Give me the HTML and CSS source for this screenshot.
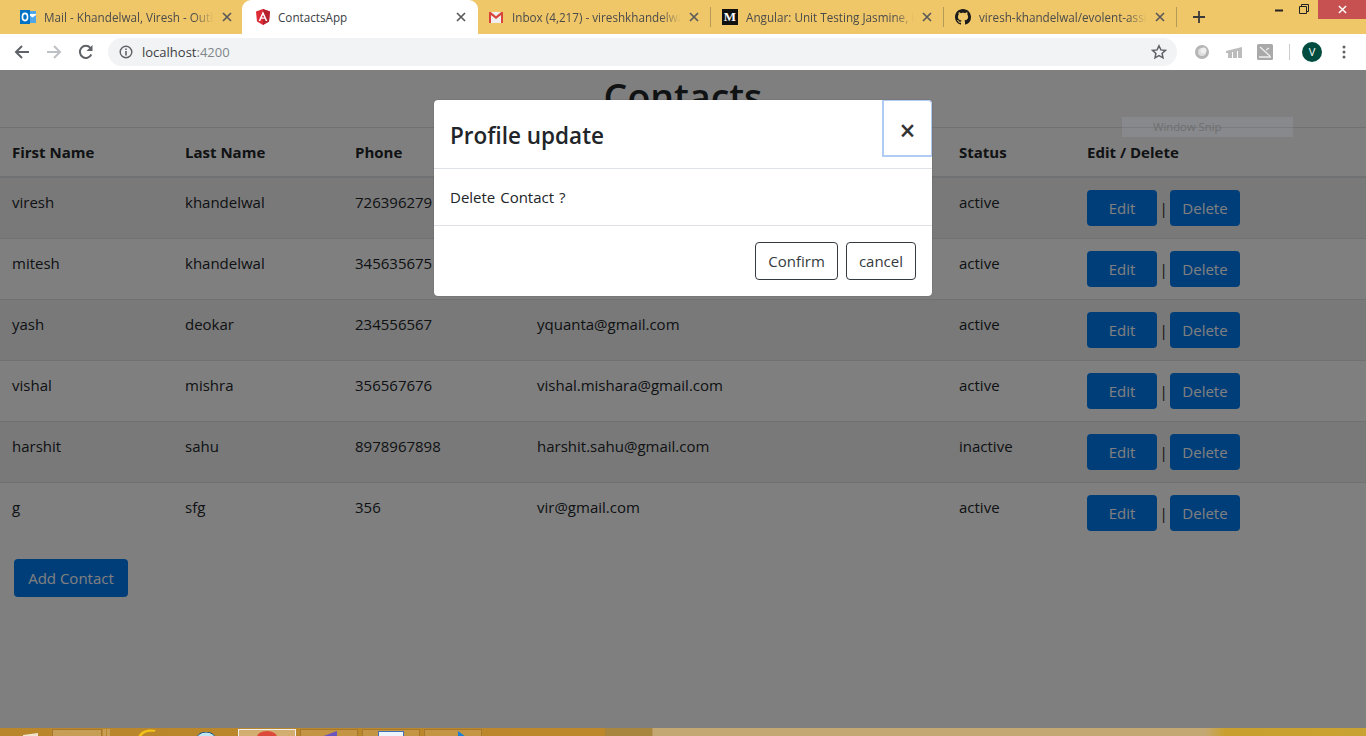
FILE: index.html
```html
<!DOCTYPE html>
<html lang="en">
<head>
<meta charset="utf-8">
<title>ContactsApp</title>
<link rel="stylesheet" href="styles.css">
</head>
<body>
<header class="tabstrip">
  <div class="tab tab-first">
    <svg class="favicon" viewBox="0 0 16 16"><rect x="6" y="2" width="10" height="12" fill="#4fa6e8"/><path d="M9 6l3.5 2.5L16 6v-1H9z" fill="#fff"/><rect y="1" width="10" height="14" fill="#0072c6"/><ellipse cx="5" cy="8" rx="2.6" ry="3.6" fill="none" stroke="#fff" stroke-width="1.6"/></svg>
    <span class="tab-title">Mail - Khandelwal, Viresh - Outlook</span>
    <svg class="tab-close" viewBox="0 0 10 10"><path d="M1 1l8 8M9 1l-8 8"/></svg>
  </div>
  <div class="tab tab-active">
    <svg class="favicon" viewBox="0 0 16 16"><path d="M8 0L1 2.5l1 10L8 16l6-3.500 1-10z" fill="#dd2c36"/><path d="M8 0v16l6-3.500 1-10z" fill="#b5212c"/><path d="M8 2.200L3.600 12h1.700l.9-2.200h3.600l.9 2.200h1.700zM8 6l1.300 2.600H6.700z" fill="#fff"/></svg>
    <span class="tab-title">ContactsApp</span>
    <svg class="tab-close" viewBox="0 0 10 10"><path d="M1 1l8 8M9 1l-8 8"/></svg>
  </div>
  <div class="tab tab-sep tab-gmail">
    <svg class="favicon favicon-gmail" viewBox="0 0 14 11"><rect width="14" height="11" fill="#eee"/><path d="M0 0h2v11H0zM12 0h2v11h-2z" fill="#d9453a"/><path d="M0 0h1.800L7 4.200 12.200 0H14v1.500L7 7 0 1.500z" fill="#d9453a"/></svg>
    <span class="tab-title">Inbox (4,217) - vireshkhandelwal@gmail.com</span>
    <svg class="tab-close" viewBox="0 0 10 10"><path d="M1 1l8 8M9 1l-8 8"/></svg>
  </div>
  <div class="tab tab-sep">
    <span class="favicon medium">M</span>
    <span class="tab-title">Angular: Unit Testing Jasmine, Karma</span>
    <svg class="tab-close" viewBox="0 0 10 10"><path d="M1 1l8 8M9 1l-8 8"/></svg>
  </div>
  <div class="tab tab-sep">
    <svg class="favicon" viewBox="0 0 16 16"><path fill="#1b1b1b" d="M8 0C3.580 0 0 3.580 0 8c0 3.540 2.290 6.530 5.470 7.590.4.070.55-.17.55-.38 0-.19-.01-.82-.01-1.490-2.010.37-2.530-.49-2.690-.94-.09-.23-.48-.94-.82-1.130-.28-.15-.68-.52-.01-.53.63-.01 1.080.58 1.230.82.72 1.210 1.870.87 2.330.66.07-.52.28-.87.51-1.070-1.780-.2-3.640-.89-3.640-3.950 0-.87.31-1.590.82-2.150-.08-.2-.36-1.020.08-2.120 0 0 .67-.21 2.200.82.64-.18 1.320-.27 2-.27.68 0 1.360.09 2 .27 1.530-1.040 2.200-.82 2.200-.82.44 1.100.16 1.920.08 2.120.51.56.82 1.270.82 2.150 0 3.070-1.870 3.750-3.650 3.950.29.25.54.73.54 1.480 0 1.070-.01 1.930-.01 2.200 0 .21.15.46.55.38A8.013 8.013 0 0016 8c0-4.420-3.580-8-8-8z"/></svg>
    <span class="tab-title">viresh-khandelwal/evolent-assignment</span>
    <svg class="tab-close" viewBox="0 0 10 10"><path d="M1 1l8 8M9 1l-8 8"/></svg>
  </div>
  <svg class="new-tab" viewBox="0 0 12 12"><path d="M6 0v12M0 6h12"/></svg>
  <div class="window-controls">
    <svg class="win-icon win-min" viewBox="0 0 10 10"><path d="M1 6.500h8" stroke="#222" stroke-width="2" fill="none"/></svg>
    <svg class="win-icon win-restore" viewBox="0 0 10 10"><path d="M.5 2.500h7v7h-7zM2.500 2.500v-2h7v7h-2" stroke="#222" stroke-width="1" fill="none"/></svg>
    <div class="win-close"><svg class="win-x" viewBox="0 0 10 10"><path d="M1 1l8 8M9 1l-8 8" stroke="#fff" stroke-width="1.600" fill="none"/></svg></div>
  </div>
</header>

<nav class="toolbar">
  <svg class="nav-icon" viewBox="0 0 16 16"><path d="M15 8H2M8 2L2 8l6 6" stroke="#5f6368" stroke-width="2" fill="none"/></svg>
  <svg class="nav-icon" viewBox="0 0 16 16"><path d="M1 8h13M8 2l6 6-6 6" stroke="#bdc1c6" stroke-width="2" fill="none"/></svg>
  <svg class="nav-icon" viewBox="0 0 16 16"><path d="M13.300 10.500A6 6 0 1 1 12.400 3.900" stroke="#5f6368" stroke-width="2" fill="none"/><path d="M14.500 1v6h-6z" fill="#5f6368"/></svg>
  <div class="omnibox">
    <svg class="info-icon" viewBox="0 0 14 14"><circle cx="7" cy="7" r="5.800" stroke="#5f6368" stroke-width="1.400" fill="none"/><path d="M6.200 6h1.600v4.500H6.200zM6.200 3.500h1.600v1.500H6.200z" fill="#5f6368"/></svg>
    <span class="url">localhost<span class="url-port">:4200</span></span>
    <svg class="star-icon" viewBox="0 0 16 16"><path d="M8 1.800l1.900 4.100 4.500.5-3.300 3 .9 4.400L8 11.600l-4 2.200.9-4.400-3.300-3 4.500-.5z" stroke="#5f6368" stroke-width="1.500" fill="none"/></svg>
  </div>
  <div class="extensions">
    <svg class="ext ext-ring" viewBox="0 0 14 14"><circle cx="7" cy="7" r="5.500" stroke="#b5b5b5" stroke-width="3" fill="#dedede"/><circle cx="8.500" cy="5.500" r="3" fill="#efefef"/></svg>
    <svg class="ext ext-bars" viewBox="0 0 16 12"><path d="M0 5l16-4v11h-4V5h-1v7H7V6H6v6H2V7H0z" fill="#bcbcbc"/></svg>
    <svg class="ext ext-box" viewBox="0 0 16 16"><rect width="16" height="16" rx="1.500" fill="#a9a9a9"/><path d="M3 3l10 9M2 13h12M9 6l3-2" stroke="#eee" stroke-width="1.300" fill="none"/></svg>
    <span class="toolbar-sep"></span>
    <span class="avatar">V</span>
    <svg class="menu-dots" viewBox="0 0 4 14"><circle cx="2" cy="2" r="1.500"/><circle cx="2" cy="7" r="1.500"/><circle cx="2" cy="12" r="1.500"/></svg>
  </div>
</nav>

<main class="page">
  <h1 class="page-title">Contacts</h1>
  <table class="contacts">
    <colgroup>
      <col class="c-first"><col class="c-last"><col class="c-phone"><col class="c-email"><col class="c-status"><col>
    </colgroup>
    <thead>
      <tr><th>First Name</th><th>Last Name</th><th>Phone</th><th>Email</th><th>Status</th><th>Edit / Delete</th></tr>
    </thead>
    <tbody>
      <tr><td>viresh</td><td>khandelwal</td><td>726396279</td><td>viresh.khandelwal@gmail.com</td><td>active</td><td><button class="btn">Edit</button><span class="pipe">|</span><button class="btn">Delete</button></td></tr>
      <tr><td>mitesh</td><td>khandelwal</td><td>345635675</td><td>mitesh.k@gmail.com</td><td>active</td><td><button class="btn">Edit</button><span class="pipe">|</span><button class="btn">Delete</button></td></tr>
      <tr><td>yash</td><td>deokar</td><td>234556567</td><td>yquanta@gmail.com</td><td>active</td><td><button class="btn">Edit</button><span class="pipe">|</span><button class="btn">Delete</button></td></tr>
      <tr><td>vishal</td><td>mishra</td><td>356567676</td><td>vishal.mishara@gmail.com</td><td>active</td><td><button class="btn">Edit</button><span class="pipe">|</span><button class="btn">Delete</button></td></tr>
      <tr><td>harshit</td><td>sahu</td><td>8978967898</td><td>harshit.sahu@gmail.com</td><td>inactive</td><td><button class="btn">Edit</button><span class="pipe">|</span><button class="btn">Delete</button></td></tr>
      <tr><td>g</td><td>sfg</td><td>356</td><td>vir@gmail.com</td><td>active</td><td><button class="btn">Edit</button><span class="pipe">|</span><button class="btn">Delete</button></td></tr>
    </tbody>
  </table>
  <button class="btn btn-add">Add Contact</button>

  <div class="backdrop"></div>
  <div class="snip">Window Snip</div>
  <section class="modal">
    <div class="modal-header">
      <h2 class="modal-title">Profile update</h2>
      <button class="modal-close">×</button>
    </div>
    <div class="modal-body">Delete Contact ?</div>
    <div class="modal-footer">
      <button class="btn-outline">Confirm</button>
      <button class="btn-outline">cancel</button>
    </div>
  </section>
</main>

<footer class="taskbar">
  <svg class="start-peek" viewBox="0 0 15 3"><path d="M0 3V2l15-2v3z" fill="#f0e6d0"/></svg>
  <div class="tb-btn tb-wide"></div>
  <div class="tb-sliver"></div>
  <div class="tb-sliver"></div>
  <svg class="tb-free tb-ie" viewBox="0 0 20 8"><path d="M1 8C3 2 10-1 19 1l-2 2C11 2 6 4 4 8z" fill="#f2c21a"/></svg>
  <svg class="tb-free tb-globe" viewBox="0 0 22 8"><path d="M1 8a10 8 0 0 1 20 0z" fill="#bfe6f5" stroke="#1a4f7a"/></svg>
  <div class="tb-btn tb-active"><svg class="tb-icon" viewBox="0 0 20 6"><path d="M0 6a10 6 0 0 1 20 0z" fill="#dc4a3c"/></svg></div>
  <div class="tb-btn"><svg class="tb-icon" viewBox="0 0 16 6"><path d="M0 6L16 0v6z" fill="#6a55c0"/></svg></div>
  <div class="tb-btn"><svg class="tb-icon tb-icon-wide" viewBox="0 0 26 6"><rect x=".5" y=".5" width="25" height="6" fill="#eef4fb" stroke="#3f6fb5"/></svg></div>
  <div class="tb-btn"><svg class="tb-icon tb-icon-right" viewBox="0 0 14 6"><path d="M0 0l8 6H0z" fill="#1a80d8"/></svg></div>
</footer>
</body>
</html>
```
FILE: styles.css
```css
* { box-sizing: border-box; }
html, body { margin: 0; height: 100%; }
body {
  display: flex;
  flex-direction: column;
  height: 736px;
  overflow: hidden;
  font-family: "Open Sans", "Noto Sans", sans-serif;
  font-size: 15px;
  color: #212529;
  background: #fff;
}

/* Tab strip */
.tabstrip {
  flex: 0 0 34px;
  display: flex;
  align-items: stretch;
  padding-left: 8px;
  background: #efc769;
  position: relative;
}
.tab {
  flex: 0 0 233px;
  min-width: 0;
  display: flex;
  align-items: center;
  padding: 0 11px 0 12px;
  position: relative;
  font-size: 11.700px;
  color: #4b4b4b;
}
.tab-first { flex-basis: 234px; padding-right: 10px; }
.tab-active {
  flex-basis: 236px;
  padding: 0 12px 0 13px;
  background: #fff;
  border-radius: 9px 9px 0 0;
  color: #3c4043;
}
.tab-active .favicon { margin-right: 7px; }
.tab-gmail { flex-basis: 232px; padding-left: 11px; }
.tab-sep::after {
  content: "";
  position: absolute;
  right: -1px;
  top: 7px;
  height: 20px;
  width: 1px;
  background: #b59a58;
}
.favicon { width: 16px; height: 16px; flex: none; margin-right: 8px; }
.tab .favicon-gmail { width: 14px; height: 11px; margin-right: 9px; }
.medium {
  background: #111;
  color: #fff;
  font: bold 13px/16px "Liberation Serif", serif;
  text-align: center;
}
.tab-title {
  flex: 1;
  min-width: 0;
  white-space: nowrap;
  overflow: hidden;
  -webkit-mask-image: linear-gradient(to right, #000 88%, transparent);
  mask-image: linear-gradient(to right, #000 88%, transparent);
}
.tab-active .tab-title { -webkit-mask-image: none; mask-image: none; }
.tab-close {
  width: 10px;
  height: 10px;
  flex: none;
  margin-left: 8px;
  stroke: #5a5a5a;
  stroke-width: 1.700;
  fill: none;
}
.new-tab {
  width: 12px;
  height: 12px;
  align-self: center;
  margin-left: 17px;
  stroke: #3a3a3a;
  stroke-width: 1.800;
  fill: none;
}
.window-controls {
  margin-left: auto;
  display: flex;
  align-items: flex-start;
}
.win-icon { width: 10px; height: 10px; margin-top: 4px; flex: none; }
.win-min { margin-right: 15px; }
.win-restore { margin-right: 9px; }
.win-close {
  width: 48px;
  height: 19px;
  background: #c75050;
  display: flex;
  align-items: center;
  justify-content: center;
}
.win-x { width: 9px; height: 9px; }

/* Toolbar */
.toolbar {
  flex: 0 0 36px;
  display: flex;
  align-items: center;
  padding: 0 0 0 14px;
  background: #fff;
}
.nav-icon { width: 16px; height: 16px; margin-right: 16px; flex: none; }
.omnibox {
  width: 1069px;
  height: 28px;
  margin-left: -2px;
  border-radius: 14px;
  background: #f1f3f4;
  display: flex;
  align-items: center;
  padding: 0 10px 0 11px;
  font-size: 13px;
  color: #3c4043;
}
.info-icon { width: 14px; height: 14px; margin-right: 9px; }
.url { flex: 1; }
.url-port { color: #80868b; }
.star-icon { width: 16px; height: 16px; }
.extensions { display: flex; align-items: center; margin-left: 18px; }
.ext { flex: none; }
.ext-ring { width: 14px; height: 14px; margin-right: 17px; }
.ext-bars { width: 16px; height: 12px; margin-right: 15px; }
.ext-box { width: 16px; height: 16px; margin-right: 16px; }
.toolbar-sep { width: 1px; height: 16px; background: #ccc; margin-right: 12px; }
.avatar {
  width: 20px;
  height: 20px;
  border-radius: 50%;
  background: #004d40;
  color: #fff;
  font-size: 11px;
  line-height: 20px;
  text-align: center;
  margin-right: 20px;
}
.menu-dots { width: 4px; height: 14px; fill: #5f6368; }

/* Page */
.page {
  flex: 1;
  position: relative;
  overflow: hidden;
  background: #fff;
}
.page-title {
  margin: 0 0 8px;
  height: 49px;
  font-size: 37.500px;
  font-weight: 600;
  line-height: 53px;
  text-align: center;
}
.contacts {
  width: 100%;
  table-layout: fixed;
  border-collapse: collapse;
  margin-bottom: 16px;
}
.c-first { width: 173px; }
.c-last { width: 170px; }
.c-phone { width: 182px; }
.c-email { width: 422px; }
.c-status { width: 128px; }
.contacts th, .contacts td {
  padding: 12px;
  text-align: left;
  vertical-align: top;
  border-top: 1px solid #dee2e6;
  line-height: 24px;
}
.contacts th { font-weight: 700; border-bottom: 2px solid #dee2e6; }
.contacts tbody tr:nth-child(odd) { background: rgba(0, 0, 0, .05); }
.btn {
  width: 70px;
  height: 36px;
  padding: 0;
  border: 0;
  border-radius: 4px;
  background: #007cf5;
  color: #fff;
  font: inherit;
  vertical-align: top;
}
.pipe {
  display: inline-block;
  width: 13px;
  line-height: 36px;
  text-align: center;
  vertical-align: top;
}
.btn-add {
  display: block;
  width: 114px;
  height: 38px;
  margin-left: 14px;
}

.backdrop {
  position: absolute;
  inset: 0;
  background: rgba(0, 0, 0, .5);
}
.snip {
  position: absolute;
  left: 1122px;
  top: 47px;
  width: 171px;
  height: 20px;
  background: rgba(200, 215, 235, .12);
  color: #6f6f6f;
  font-size: 11.300px;
  line-height: 20px;
  padding-left: 31px;
}

/* Modal */
.modal {
  position: absolute;
  left: 434px;
  top: 30px;
  width: 498px;
  height: 196px;
  background: #fff;
  border-radius: 4px;
  display: flex;
  flex-direction: column;
  box-shadow: 0 0 1px rgba(0, 0, 0, .5);
}
.modal-header {
  flex: 0 0 69px;
  display: flex;
  justify-content: space-between;
  align-items: flex-start;
  padding-left: 16px;
  border-bottom: 1px solid #dee2e6;
}
.modal-title {
  margin: 18px 0 0;
  font-size: 22.500px;
  font-weight: 600;
  line-height: 36px;
}
.modal-close {
  width: 50px;
  height: 57px;
  padding: 3px 0 0;
  background: #fff;
  border: 1px solid #b0ccf5;
  border-width: 1px 1px 2px 2px;
  border-radius: 0 4px 0 0;
  font: 600 28px/1 "Open Sans", sans-serif;
  color: #333;
}
.modal-body {
  flex: 0 0 57px;
  padding: 16px 16px 0;
  line-height: 24px;
  word-spacing: 1px;
  border-bottom: 1px solid #dee2e6;
}
.modal-footer {
  flex: 1;
  display: flex;
  justify-content: flex-end;
  gap: 8px;
  padding: 16px 16px 0;
}
.btn-outline {
  height: 38px;
  padding: 0 12px;
  background: #fff;
  border: 1px solid #343a40;
  border-radius: 4px;
  font: inherit;
  color: #343a40;
}

/* Taskbar */
.taskbar {
  flex: 0 0 8px;
  display: flex;
  align-items: flex-start;
  overflow: hidden;
  padding: 1px 0 0 23px;
  background: linear-gradient(90deg, #b9862c 0, #bd882c 605px, #a8863f 605px, #a8863f 652px, #c4a873 653px, #c4a873 1205px, #c9a02f 1225px, #c8a232 100%);
}
.start-peek { width: 15px; height: 3px; margin-top: 4px; flex: none; }
.tb-btn {
  flex: none;
  width: 58px;
  height: 9px;
  margin-right: 4px;
  background: rgba(255, 255, 255, .12);
  border: 1px solid #a6782e;
  display: flex;
  justify-content: center;
}
.tb-wide { width: 50px; margin: 0 1px 0 14px; background: rgba(255, 255, 255, .2); }
.tb-sliver { width: 3px; height: 9px; margin-right: 1px; flex: none; background: rgba(255, 255, 255, .2); }
.tb-free { flex: none; width: 20px; height: 8px; }
.tb-ie { margin-left: 26px; }
.tb-globe { width: 22px; margin-left: 38px; margin-right: 21px; margin-top: 3px; }
.tb-active { background: #d4ae70; border-color: #eee; }
.tb-icon { width: 20px; height: 6px; margin-top: 1px; }
.tb-icon-wide { width: 26px; }
.tb-icon-right { width: 14px; margin-left: 24px; }
```
